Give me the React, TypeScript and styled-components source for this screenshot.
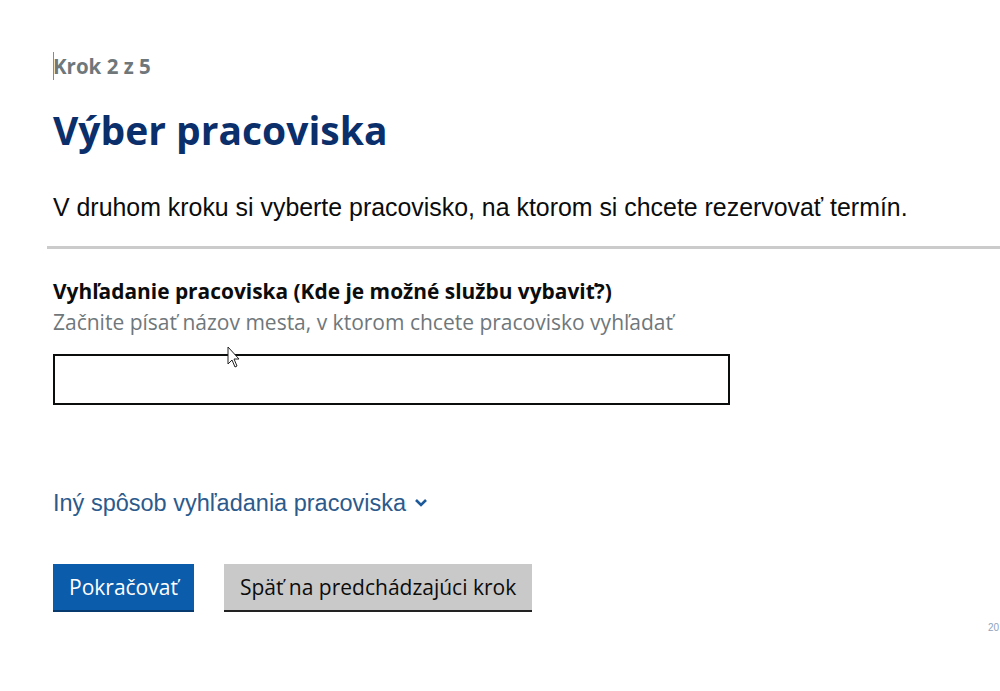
import * as React from 'react';
import styled, {createGlobalStyle} from 'styled-components';

//region [[ Styles ]]

const GlobalStyle = createGlobalStyle`
  html, body {
    margin: 0;
    padding: 0;
    background: #ffffff;
  }
  body {
    font-family: "Open Sans", "Noto Sans", sans-serif;
  }
`;

const Page = styled.div`
  position: relative;
  width: 1000px;
  height: 691px;
  overflow: hidden;
  background: #ffffff;
`;

const Content = styled.div`
  display: flex;
  flex-direction: column;
  padding: 52px 0 0 53px;
`;

const StepRow = styled.div`
  display: flex;
  align-items: center;
  height: 28px;
`;

const Caret = styled.span`
  display: inline-block;
  width: 1px;
  height: 28px;
  margin-right: -1px;
  background: #8a8a8a;
`;

const StepLabel = styled.span`
  font-size: 20.5px;
  font-weight: 700;
  color: #6f777b;
`;

const Heading = styled.h1`
  margin: 24px 0 0 0;
  font-size: 39px;
  line-height: 52px;
  font-weight: 700;
  color: #0b2f6b;
`;

const Lead = styled.p`
  margin: 36px 0 0 0;
  font-family: "Liberation Sans", Arial, sans-serif;
  font-size: 24.9px;
  line-height: 30px;
  color: #0b0c0c;
`;

const Divider = styled.hr`
  margin: 24px 0 0 -6px;
  border: none;
  height: 3px;
  background: #cbcbcb;
`;

const Field = styled.div`
  display: flex;
  flex-direction: column;
  margin-top: 29px;
`;

const Label = styled.label`
  font-size: 20.9px;
  line-height: 26px;
  font-weight: 700;
  color: #0b0c0c;
`;

const Hint = styled.span`
  margin-top: 5px;
  font-size: 21px;
  line-height: 26px;
  color: #6f777b;
`;

const Input = styled.input`
  box-sizing: border-box;
  margin-top: 19px;
  width: 677px;
  height: 51px;
  border: 2px solid #0b0c0c;
  outline: none;
  padding: 6px 10px;
  font-size: 19px;
`;

const ToggleLink = styled.a`
  display: flex;
  align-items: center;
  gap: 8px;
  margin-top: 85px;
  font-family: "Liberation Sans", Arial, sans-serif;
  font-size: 23.5px;
  line-height: 26px;
  color: #2c5a8c;
  text-decoration: none;
  cursor: pointer;
`;

const Actions = styled.div`
  display: flex;
  gap: 30px;
  margin-top: 48px;
`;

const Button = styled.button<{ $secondary?: boolean }>`
  box-sizing: border-box;
  height: 48px;
  padding: 0 16px;
  border: none;
  border-bottom: 2px solid ${(p) => (p.$secondary ? '#222222' : '#073a6e')};
  background: ${(p) => (p.$secondary ? '#c9c9c9' : '#0b5cab')};
  color: ${(p) => (p.$secondary ? '#0b0c0c' : '#ffffff')};
  font-family: "Open Sans", "Noto Sans", sans-serif;
  font-size: 21px;
  cursor: pointer;
`;

const Corner = styled.span`
  position: absolute;
  left: 988px;
  top: 622px;
  font-family: "Liberation Sans", Arial, sans-serif;
  font-size: 10px;
  color: #8fa3bd;
`;

const Pointer = styled.svg`
  position: absolute;
  left: 227px;
  top: 346px;
`;

//endregion [[ Styles ]]

export default function App() {
  return <Page>
    <GlobalStyle/>
    <Content>
      <StepRow>
        <Caret/>
        <StepLabel>Krok 2 z 5</StepLabel>
      </StepRow>
      <Heading>Výber pracoviska</Heading>
      <Lead>V druhom kroku si vyberte pracovisko, na ktorom si chcete rezervovať termín.</Lead>
      <Divider/>
      <Field>
        <Label htmlFor="search">Vyhľadanie pracoviska (Kde je možné službu vybaviť?)</Label>
        <Hint>Začnite písať názov mesta, v ktorom chcete pracovisko vyhľadať</Hint>
        <Input id="search" type="text"/>
      </Field>
      <ToggleLink>
        Iný spôsob vyhľadania pracoviska
        <svg width="14" height="10" viewBox="0 0 14 10">
          <path d="M2 2 L7 7 L12 2" fill="none" stroke="#1d5a9a" strokeWidth="2.6"/>
        </svg>
      </ToggleLink>
      <Actions>
        <Button>Pokračovať</Button>
        <Button $secondary>Späť na predchádzajúci krok</Button>
      </Actions>
    </Content>
    <Corner>20</Corner>
    <Pointer width="14" height="24" viewBox="0 0 14 24">
      <path d="M1 1 L1 18 L5 14 L8 21 L10 20 L7 13 L12 13 Z" fill="#ffffff" stroke="#222222" strokeWidth="1"/>
    </Pointer>
  </Page>;
}
